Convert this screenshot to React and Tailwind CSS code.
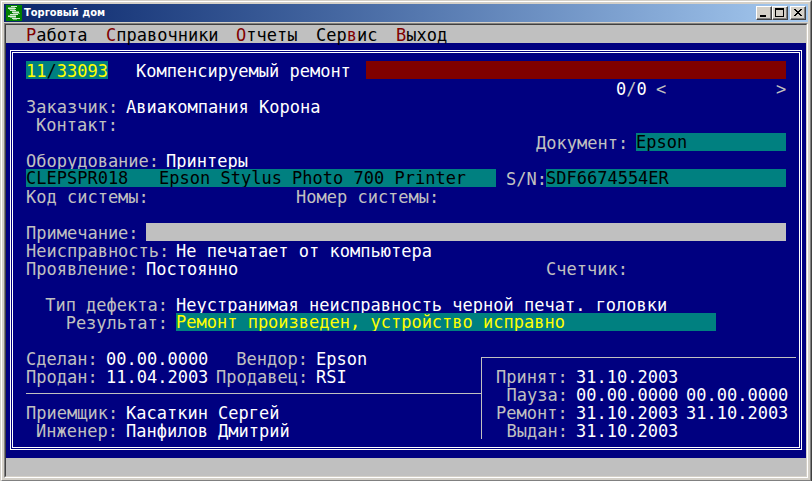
import React from "react";

function Row({ children }) {
  return <div className="flex h-[18px] leading-5 whitespace-pre">{children}</div>;
}

function Value({ children, className = "" }) {
  return <span className={`text-white ${className}`}>{children}</span>;
}

function Field({ id, value = "", className }) {
  return (
    <input
      id={id}
      aria-label={id}
      defaultValue={value}
      spellCheck={false}
      className={`h-[18px] min-w-0 rounded-none border-0 p-0 leading-[18px] outline-none ${className}`}
    />
  );
}

function MenuItem({ before = "", hot, after, className }) {
  return (
    <button
      type="button"
      className={`block h-[18px] px-0 pt-[2px] pb-0 text-left leading-4 whitespace-nowrap ${className}`}
    >
      {before}
      <span className="text-[#800000]">{hot}</span>
      {after}
    </button>
  );
}

function CaptionButton({ label, children, className = "" }) {
  return (
    <button
      type="button"
      aria-label={label}
      className={`block h-[14px] w-4 border border-t-white border-l-white border-r-[#404040] border-b-[#404040] bg-[#d4d0c8] p-0 shadow-[inset_-1px_-1px_0_#808080] ${className}`}
    >
      <svg width="14" height="12" viewBox="0 0 14 12" shapeRendering="crispEdges" className="block">
        {children}
      </svg>
    </button>
  );
}

function AppIcon() {
  return (
    <svg width="16" height="16" viewBox="0 0 16 16" shapeRendering="crispEdges">
      <path fill="#008000" d="M0 0h16v16H0z" />
      <path
        fill="#d8ecd8"
        d="M5 1h6v1H5zM2 3h8v1H2zM4 5h6v1H4zM6 7h7v1H6zM4 9h8v1H4zM2 11h8v1H2zM6 13h8v1H6z"
      />
      <path fill="#70b870" d="M2 2h7v1H2zM3 4h6v1H3zM6 6h7v1H6zM7 8h7v1H7zM2 10h8v1H2zM4 12h6v1H4zM7 14h4v1H7z" />
    </svg>
  );
}

export default function App() {
  return (
    <div className="border border-t-[#d4d0c8] border-l-[#d4d0c8] border-r-[#404040] border-b-[#404040] bg-[#d4d0c8]">
      <div className="border border-t-white border-l-white border-r-[#808080] border-b-[#808080] p-[2px]">
        <header className="flex h-[18px] items-center bg-linear-to-r from-[#0a246a] to-[#a6caf0] px-[2px]">
          <AppIcon />
          <h1 className="ml-[2px] flex-1 font-['DejaVu_Sans_Condensed','DejaVu_Sans',sans-serif] text-[11px] leading-[18px] font-bold text-white">
            Торговый дом
          </h1>
          <CaptionButton label="Свернуть">
            <path d="M3 8h6v2H3z" />
          </CaptionButton>
          <CaptionButton label="Развернуть">
            <path fillRule="evenodd" d="M2 1h9v9H2zM3 3v6h7V3z" />
          </CaptionButton>
          <CaptionButton label="Закрыть" className="ml-[2px]">
            <path d="M3 2h2v1H3zM9 2h2v1H9zM4 3h2v1H4zM8 3h2v1H8zM5 4h4v1H5zM6 5h2v1H6zM5 6h4v1H5zM4 7h2v1H4zM8 7h2v1H8zM3 8h2v1H3zM9 8h2v1H9z" />
          </CaptionButton>
        </header>

        <div className="mt-px border border-t-[#808080] border-l-[#808080] border-r-white border-b-white">
          <div className="border border-t-[#404040] border-l-[#404040] border-r-[#d4d0c8] border-b-[#d4d0c8] font-['DejaVu_Sans_Mono',monospace] text-[17px]">
            <nav className="flex h-[18px] gap-5 bg-[#c0c0c0] px-5 text-black">
              <MenuItem hot="Р" after="абота" className="w-[60px]" />
              <MenuItem hot="С" after="правочники" className="w-[110px]" />
              <MenuItem hot="О" after="тчеты" className="w-[60px]" />
              <MenuItem before="Сер" hot="в" after="ис" className="w-[60px]" />
              <MenuItem hot="В" after="ыход" className="w-[50px]" />
            </nav>

            <main className="bg-[#000080] px-1 pt-[7px] pb-2 text-[#c0c0c0]">
              <div className="border-[3px] border-double border-white px-[13px] py-2">
                <Row>
                  <span className="bg-[#008080] text-[#ffff00]">
                    11<span className="text-black">/</span>33093
                  </span>
                  <Value className="ml-7 w-[230px]">Компенсируемый ремонт</Value>
                  <Field id="Состояние" className="flex-1 bg-[#800000] text-white" />
                </Row>
                <Row>
                  <span className="ml-auto w-10">
                    <Value>0</Value>/<Value>0</Value>
                  </span>
                  <button type="button" aria-label="Назад" className="w-[10px] p-0">{"<"}</button>
                  <button type="button" aria-label="Вперед" className="ml-[110px] w-[10px] p-0">{">"}</button>
                </Row>
                <Row>
                  <span className="w-[100px]">Заказчик:</span>
                  <Value>Авиакомпания Корона</Value>
                </Row>
                <Row>
                  <span className="w-[100px] pr-2 text-right">Контакт:</span>
                </Row>
                <Row>
                  <label htmlFor="Документ" className="ml-auto w-[100px]">Документ:</label>
                  <Field id="Документ" value="Epson" className="w-[150px] bg-[#008080] text-black" />
                </Row>
                <Row>
                  <span className="w-[140px]">Оборудование:</span>
                  <Value>Принтеры</Value>
                </Row>
                <Row>
                  <Field
                    id="Модель"
                    value="CLEPSPR018   Epson Stylus Photo 700 Printer"
                    className="flex-1 bg-[#008080] text-black"
                  />
                  <label htmlFor="S/N" className="ml-[10px] w-10">S/N:</label>
                  <Field id="S/N" value="SDF6674554ER" className="w-[240px] bg-[#008080] text-black" />
                </Row>
                <Row>
                  <span className="w-[270px]">Код системы:</span>
                  <span>Номер системы:</span>
                </Row>
                <div className="mt-[18px]">
                  <Row>
                    <label htmlFor="Примечание" className="w-[120px]">Примечание:</label>
                    <Field id="Примечание" className="flex-1 bg-[#c0c0c0] text-black" />
                  </Row>
                  <Row>
                    <span className="w-[150px]">Неисправность:</span>
                    <Value>Не печатает от компьютера</Value>
                  </Row>
                  <Row>
                    <span className="w-[120px]">Проявление:</span>
                    <Value>Постоянно</Value>
                    <span className="ml-auto w-[240px]">Счетчик:</span>
                  </Row>
                </div>
                <div className="mt-[18px]">
                  <Row>
                    <span className="w-[150px] pr-2 text-right">Тип дефекта:</span>
                    <Value>Неустранимая неисправность черной печат. головки</Value>
                  </Row>
                  <Row>
                    <label htmlFor="Результат" className="w-[150px] pr-2 text-right">Результат:</label>
                    <Field
                      id="Результат"
                      value="Ремонт произведен, устройство исправно"
                      className="mr-[70px] flex-1 bg-[#008080] text-[#ffff00]"
                    />
                  </Row>
                </div>
                <div className="mt-[18px] flex">
                  <section className="flex-1">
                    <Row>
                      <span className="w-20">Сделан:</span>
                      <Value className="w-[110px]">00.00.0000</Value>
                      <span className="w-[100px] pr-2 text-right">Вендор:</span>
                      <Value>Epson</Value>
                    </Row>
                    <Row>
                      <span className="w-20">Продан:</span>
                      <Value className="w-[110px]">11.04.2003</Value>
                      <span className="w-[100px]">Продавец:</span>
                      <Value>RSI</Value>
                    </Row>
                    <hr className="mt-2 mb-[9px] border-t border-[#c0c0c0]" />
                    <Row>
                      <span className="w-[100px]">Приемщик:</span>
                      <Value>Касаткин Сергей</Value>
                    </Row>
                    <Row>
                      <span className="w-[100px] pr-2 text-right">Инженер:</span>
                      <Value>Панфилов Дмитрий</Value>
                    </Row>
                  </section>
                  <section className="mt-2 -mr-[10px] w-[315px] border-t border-l border-[#c0c0c0] pt-[9px] pl-[14px]">
                    <Row>
                      <span className="w-20">Принят:</span>
                      <Value>31.10.2003</Value>
                    </Row>
                    <Row>
                      <span className="w-20 pr-2 text-right">Пауза:</span>
                      <Value className="w-[110px]">00.00.0000</Value>
                      <Value>00.00.0000</Value>
                    </Row>
                    <Row>
                      <span className="w-20">Ремонт:</span>
                      <Value className="w-[110px]">31.10.2003</Value>
                      <Value>31.10.2003</Value>
                    </Row>
                    <Row>
                      <span className="w-20 pr-2 text-right">Выдан:</span>
                      <Value>31.10.2003</Value>
                    </Row>
                  </section>
                </div>
              </div>
            </main>

            <footer className="h-[18px] bg-[#c0c0c0]" />
          </div>
        </div>
      </div>
    </div>
  );
}
